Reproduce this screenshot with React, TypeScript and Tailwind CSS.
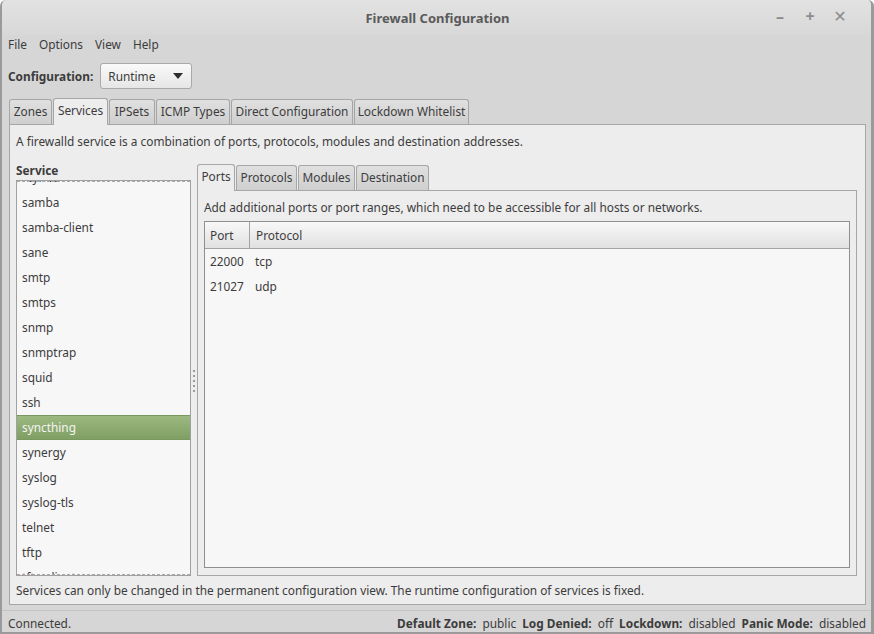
import React from "react";

const services = [
  "rsyncd",
  "samba",
  "samba-client",
  "sane",
  "smtp",
  "smtps",
  "snmp",
  "snmptrap",
  "squid",
  "ssh",
  "syncthing",
  "synergy",
  "syslog",
  "syslog-tls",
  "telnet",
  "tftp",
  "tftp-client",
];

const mainTabs: { label: string; w: string; active?: boolean }[] = [
  { label: "Zones", w: "w-[43px]" },
  { label: "Services", w: "w-[55px]", active: true },
  { label: "IPSets", w: "w-[46px]" },
  { label: "ICMP Types", w: "w-[74px]" },
  { label: "Direct Configuration", w: "w-[122px]" },
  { label: "Lockdown Whitelist", w: "w-[115px]" },
];

const subTabs: { label: string; w: string; active?: boolean }[] = [
  { label: "Ports", w: "w-[38px]", active: true },
  { label: "Protocols", w: "w-[61px]" },
  { label: "Modules", w: "w-[57px]" },
  { label: "Destination", w: "w-[73px]" },
];

function Tab({ label, w, active }: { label: string; w: string; active?: boolean }) {
  if (active) {
    return (
      <div
        className={`${w} h-[27px] relative z-10 -mb-px flex items-start justify-center pt-[3px] whitespace-nowrap rounded-t-[3px] border border-b-0 border-[#a6a6a6] bg-[#ededed] text-[#3c3c3c]`}
      >
        {label}
      </div>
    );
  }
  return (
    <div
      className={`${w} h-[25px] flex items-center justify-center pb-[2px] whitespace-nowrap rounded-t-[3px] border border-b-0 border-[#a6a6a6] bg-gradient-to-b from-[#e0e0e0] to-[#cfcfcf] text-[#3c3c3c]`}
    >
      {label}
    </div>
  );
}

export default function App() {
  return (
    <div
      className="w-[874px] h-[634px] overflow-hidden bg-[#d6d6d6] text-[11.85px] leading-[17px] text-[#3c3c3c] flex flex-col rounded-t-[6px] border-l-2 border-r-[3px] border-b-2 border-[#9a9a9a]"
      style={{ fontFamily: '"Noto Sans", "DejaVu Sans", sans-serif' }}
    >
      {/* Title bar */}
      <div className="h-[35px] shrink-0 relative flex items-center justify-center bg-gradient-to-b from-[#e2e2e2] to-[#d8d8d8]">
        <span className="font-bold text-[13px] text-[#5a5a5a] ml-[2px] mt-[2px]">Firewall Configuration</span>
        <div className="absolute right-[24px] top-[8px] flex items-center gap-[16px] text-[#8c8c8c] font-bold text-[16px]">
          <span className="w-[14px] text-center">–</span>
          <span className="w-[14px] text-center">+</span>
          <span className="w-[14px] text-center">✕</span>
        </div>
      </div>

      {/* Menu bar */}
      <div className="h-[18px] shrink-0 flex items-center pl-[6px] gap-[12px]">
        <span>File</span>
        <span>Options</span>
        <span>View</span>
        <span>Help</span>
      </div>

      {/* Configuration row */}
      <div className="h-[36px] shrink-0 flex items-start pt-[10px] pl-[6px]">
        <span className="font-bold h-[26px] flex items-center">Configuration:</span>
        <div className="ml-[7px] w-[92px] h-[26px] rounded-[3px] border border-[#a9a9a9] bg-gradient-to-b from-[#fafafa] to-[#e6e6e6] flex items-center justify-between pl-[7px] pr-[8px]">
          <span>Runtime</span>
          <svg width="10" height="6" viewBox="0 0 10 6">
            <path d="M0 0 L10 0 L5 6 Z" fill="#2e2e2e" />
          </svg>
        </div>
      </div>

      {/* Main tabs */}
      <div className="mt-[8px] ml-[7px] h-[27px] shrink-0 flex items-end gap-[1px]">
        {mainTabs.map((t) => (
          <Tab key={t.label} {...t} />
        ))}
      </div>

      {/* Main panel */}
      <div className="ml-[7px] w-[857px] h-[481px] shrink-0 border border-[#a6a6a6] bg-[#ededed] flex flex-col pl-[6px] pr-[8px] pt-[8px]">
        <div className="h-[17px]">
          A firewalld service is a combination of ports, protocols, modules and destination addresses.
        </div>

        <div className="mt-[11px] h-[415px] flex">
          {/* Left column */}
          <div className="w-[175px] flex flex-col">
            <div className="h-[19px] font-bold leading-[19px]">Service</div>
            <div className="h-[396px] relative border border-[#a0a0a0] bg-[#f7f7f7] overflow-hidden">
              <div className="-mt-[16px]">
                {services.map((s) => (
                  <div
                    key={s}
                    className={
                      s === "syncthing"
                        ? "h-[25px] flex items-center pl-[5px] text-[#f4f4f4] bg-gradient-to-b from-[#9bb980] to-[#809f64] border-y border-[#7a9960]"
                        : "h-[25px] flex items-center pl-[5px]"
                    }
                  >
                    {s}
                  </div>
                ))}
              </div>
              <div className="absolute left-0 right-0 top-0 border-t border-dashed border-[#a9a9a9]" />
              <div className="absolute left-0 right-0 bottom-0 border-t border-dashed border-[#a9a9a9]" />
            </div>
          </div>

          {/* Pane handle */}
          <div className="w-[6px] flex flex-col items-center justify-center gap-[3px] pt-[24px]">
            {[0, 1, 2, 3, 4].map((i) => (
              <div key={i} className="w-[2px] h-[2px] bg-[#9a9a9a]" />
            ))}
          </div>

          {/* Right notebook */}
          <div className="w-[660px] flex flex-col pt-[3px]">
            <div className="h-[26px] flex items-end gap-[1px]">
              {subTabs.map((t) => (
                <Tab key={t.label} {...t} />
              ))}
            </div>
            <div className="h-[386px] border border-[#a6a6a6] bg-[#ededed] flex flex-col px-[6px] pt-[8px]">
              <div className="h-[17px]">
                Add additional ports or port ranges, which need to be accessible for all hosts or networks.
              </div>
              <div className="mt-[5px] h-[347px] border border-[#8f8f8f] bg-[#f7f7f7] flex flex-col">
                <div className="h-[27px] flex border-b border-[#a3a3a3] bg-gradient-to-b from-[#f8f8f8] to-[#e1e1e1]">
                  <div className="w-[45px] pl-[5px] flex items-center border-r border-[#a3a3a3]">Port</div>
                  <div className="pl-[6px] flex items-center">Protocol</div>
                </div>
                {[
                  ["22000", "tcp"],
                  ["21027", "udp"],
                ].map(([p, proto]) => (
                  <div key={p} className="h-[25px] flex items-center">
                    <div className="w-[45px] pl-[5px]">{p}</div>
                    <div className="pl-[5px]">{proto}</div>
                  </div>
                ))}
              </div>
            </div>
          </div>
        </div>

        <div className="mt-[6px] h-[17px]">
          Services can only be changed in the permanent configuration view. The runtime configuration of services is fixed.
        </div>
      </div>

      {/* Status bar */}
      <div className="mt-[5px] flex-1 border-t border-[#c4c4c4] flex items-center justify-between pl-[6px] pr-[5px] pt-[3px]">
        <span>Connected.</span>
        <span className="flex gap-[6px]">
          <span>
            <b>Default Zone:</b>&nbsp; public
          </span>
          <span>
            <b>Log Denied:</b>&nbsp; off
          </span>
          <span>
            <b>Lockdown:</b>&nbsp; disabled
          </span>
          <span>
            <b>Panic Mode:</b>&nbsp; disabled
          </span>
        </span>
      </div>
    </div>
  );
}
